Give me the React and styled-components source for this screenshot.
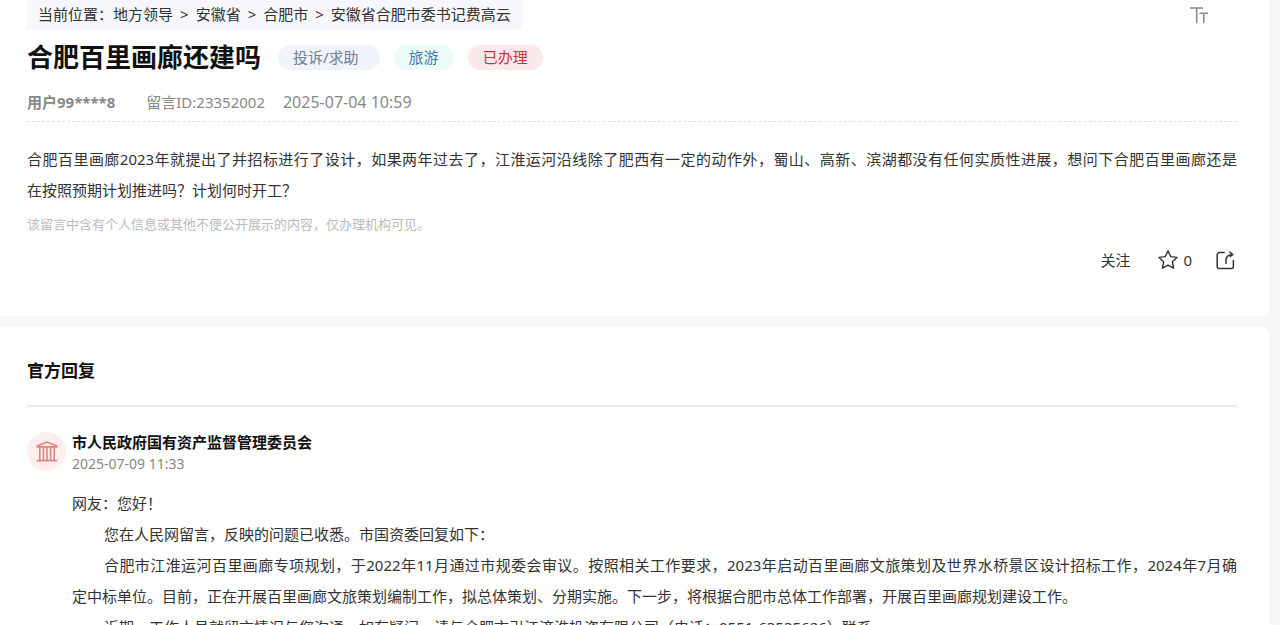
import React from "react";
import styled, { createGlobalStyle } from "styled-components";

const GlobalStyle = createGlobalStyle`
  *, *::before, *::after { box-sizing: border-box; }
  html { scrollbar-width: none; }
  body {
    margin: 0;
    background: #f6f7f9;
    color: #333;
    font-family: "Noto Sans", "Noto Sans CJK SC", sans-serif;
    font-size: 15px;
    line-height: 24px;
  }
  h1, h2, h3, p, ol { margin: 0; padding: 0; }
  button { font: inherit; color: inherit; background: none; border: 0; padding: 0; cursor: pointer; }
  a { color: inherit; text-decoration: none; }
  svg { display: block; }
`;

const Page = styled.main`
  display: flex;
  flex-direction: column;
  gap: 11px;
  padding-right: 11px;
`;

const Card = styled.section`
  background: #fff;
  border-radius: ${(p) => (p.$first ? "0 0 8px 0" : "0 8px 0 0")};
  padding: ${(p) => (p.$first ? "0 32px 44px 27px" : "28px 32px 32px 27px")};
`;

const TopBar = styled.div`
  display: flex;
  justify-content: space-between;
  padding-right: 29px;
`;

const Crumbs = styled.nav`
  background: #f5f7fa;
  padding: 0 11px 2px;
  line-height: 28px;
`;

const CrumbList = styled.ol`
  display: flex;
  list-style: none;
`;

const Crumb = styled.li`
  & + &:not(:nth-child(2))::before {
    content: ">";
    margin: 0 7px;
  }
`;

const SizeButton = styled.button`
  color: #888;
`;

const TitleRow = styled.header`
  display: flex;
  align-items: center;
  gap: 14px;
  padding-top: 8px;
`;

const Title = styled.h1`
  font-size: 26px;
  line-height: 38px;
  color: #111;
  margin-right: 3px;
`;

const tones = {
  type: { bg: "#f0f3fa", fg: "#6f8094" },
  topic: { bg: "#ecfdf9", fg: "#3f78b4" },
  status: { bg: "#fae8ea", fg: "#c73442" },
};

const Tag = styled.span`
  border-radius: 13px;
  line-height: 25px;
  padding: 0 ${(p) => (p.$wide ? 21 : 15)}px 0 15px;
  background: ${(p) => tones[p.$tone].bg};
  color: ${(p) => tones[p.$tone].fg};
`;

const Meta = styled.div`
  display: flex;
  gap: 18px;
  padding: 14px 0 7px;
  color: #888;
  border-bottom: 1px dashed #e2e2e2;
`;

const User = styled.strong`
  margin-right: 13px;
`;

const MetaTime = styled.time`
  font-size: 16px;
`;

const Prose = styled.div`
  line-height: 31px;
  padding-top: ${(p) => p.$top}px;
`;

const Line = styled.span`
  display: block;
  text-align: justify;
  text-align-last: ${(p) => (p.$full ? "justify" : "left")};
  text-indent: ${(p) => (p.$indent ? "32px" : "0")};
`;

const Note = styled.p`
  font-size: 13px;
  color: #bbb;
  margin-top: 6px;
`;

const Actions = styled.div`
  display: flex;
  justify-content: flex-end;
  align-items: center;
  gap: 24px;
  margin-top: 12px;
  padding-right: 2px;
`;

const Action = styled.button`
  display: flex;
  align-items: center;
  gap: 5px;
  margin-right: ${(p) => (p.$spaced ? 4 : 0)}px;
`;

const SectionTitle = styled.h2`
  font-size: 17px;
  line-height: 32px;
  color: #111;
  padding-bottom: 18px;
  border-bottom: 2px solid #ececec;
`;

const Reply = styled.article`
  display: grid;
  grid-template-columns: 39px 1fr;
  column-gap: 6px;
  padding-top: 24px;
`;

const Avatar = styled.div`
  display: grid;
  place-items: center;
  width: 39px;
  height: 39px;
  margin-top: 1px;
  border-radius: 50%;
  background: #feeeed;
  color: #dd8782;
`;

const Office = styled.h3`
  font-size: 15px;
  line-height: 22px;
  color: #111;
`;

const ReplyTime = styled.time`
  display: block;
  font-size: 14px;
  line-height: 21px;
  color: #888;
`;

const TextSizeIcon = () => (
  <svg width="18" height="17" viewBox="0 0 18 17" fill="none" stroke="currentColor" strokeWidth="1.5" aria-hidden="true">
    <path d="M0 1h13M6.7 1v15.2M9.5 6.2h8.5M13.8 6.2v10" />
  </svg>
);

const StarIcon = () => (
  <svg width="20" height="20" viewBox="0 0 20 20" fill="none" stroke="currentColor" strokeWidth="1.4" strokeLinejoin="round" aria-hidden="true">
    <path d="M10 .9l2.7 5.7 6.3.8-4.6 4.4 1.2 6.4-5.6-3.1-5.6 3.1 1.2-6.4L1 7.4l6.3-.8z" />
  </svg>
);

const ShareIcon = () => (
  <svg width="19" height="19" viewBox="0 0 19 19" fill="none" stroke="currentColor" strokeWidth="1.5" strokeLinecap="round" strokeLinejoin="round" aria-hidden="true">
    <path d="M8.2 1.6H3.2A2 2 0 0 0 1.2 3.6v12a2 2 0 0 0 2 2h12.2a2 2 0 0 0 2-2V9.5" />
    <path d="M10 12.4V9.2c0-3.2 2-5.4 6.6-5.6M13.8 1l3 2.6-2.6 1.8" />
  </svg>
);

const HallIcon = () => (
  <svg width="22" height="21" viewBox="0 0 22 21" fill="none" stroke="currentColor" strokeWidth="1.6" strokeLinejoin="round" aria-hidden="true">
    <path d="M1.2 5.9V4.9L11 1l9.8 3.9v1zM.8 19.6h20.4M3.8 5.9v13.6M7.4 5.9v13.6M11 5.9v13.6M14.6 5.9v13.6M18.2 5.9v13.6" />
  </svg>
);

const places = ["地方领导", "安徽省", "合肥市", "安徽省合肥市委书记费高云"];

export default function App() {
  return (
    <>
      <GlobalStyle />
      <Page lang="zh-CN">
        <Card $first>
          <TopBar>
            <Crumbs aria-label="当前位置">
              <CrumbList>
                <Crumb>当前位置：</Crumb>
                {places.map((name) => (
                  <Crumb key={name}>
                    <a href="#">{name}</a>
                  </Crumb>
                ))}
              </CrumbList>
            </Crumbs>
            <SizeButton type="button" aria-label="字号">
              <TextSizeIcon />
            </SizeButton>
          </TopBar>
          <TitleRow>
            <Title>合肥百里画廊还建吗</Title>
            <Tag $tone="type" $wide>投诉/求助</Tag>
            <Tag $tone="topic">旅游</Tag>
            <Tag $tone="status">已办理</Tag>
          </TitleRow>
          <Meta>
            <User>用户99****8</User>
            <span>留言ID:23352002</span>
            <MetaTime dateTime="2025-07-04T10:59">2025-07-04 10:59</MetaTime>
          </Meta>
          <Prose $top={22}>
            <p>
              <Line $full>
                合肥百里画廊2023年就提出了并招标进行了设计，如果两年过去了，江淮运河沿线除了肥西有一定的动作外，蜀山、高新、滨湖都没有任何实质性进展，想问下合肥百里画廊还是
              </Line>
              <Line>在按照预期计划推进吗？计划何时开工？</Line>
            </p>
          </Prose>
          <Note>该留言中含有个人信息或其他不便公开展示的内容，仅办理机构可见。</Note>
          <Actions>
            <Action type="button" $spaced>关注</Action>
            <Action type="button" aria-label="收藏 0">
              <StarIcon />
              <span>0</span>
            </Action>
            <Action type="button" aria-label="分享">
              <ShareIcon />
            </Action>
          </Actions>
        </Card>
        <Card>
          <SectionTitle>官方回复</SectionTitle>
          <Reply>
            <Avatar>
              <HallIcon />
            </Avatar>
            <div>
              <Office>市人民政府国有资产监督管理委员会</Office>
              <ReplyTime dateTime="2025-07-09T11:33">2025-07-09 11:33</ReplyTime>
              <Prose $top={14}>
                <p>网友：您好！</p>
                <p>
                  <Line $indent>您在人民网留言，反映的问题已收悉。市国资委回复如下：</Line>
                </p>
                <p>
                  <Line $full $indent>
                    合肥市江淮运河百里画廊专项规划，于2022年11月通过市规委会审议。按照相关工作要求，2023年启动百里画廊文旅策划及世界水桥景区设计招标工作，2024年7月确
                  </Line>
                  <Line>
                    定中标单位。目前，正在开展百里画廊文旅策划编制工作，拟总体策划、分期实施。下一步，将根据合肥市总体工作部署，开展百里画廊规划建设工作。
                  </Line>
                </p>
                <p>
                  <Line $indent>
                    近期，工作人员就留言情况与您沟通，如有疑问，请与合肥市引江济淮投资有限公司（电话：0551-63535626）联系。
                  </Line>
                </p>
              </Prose>
            </div>
          </Reply>
        </Card>
      </Page>
    </>
  );
}
